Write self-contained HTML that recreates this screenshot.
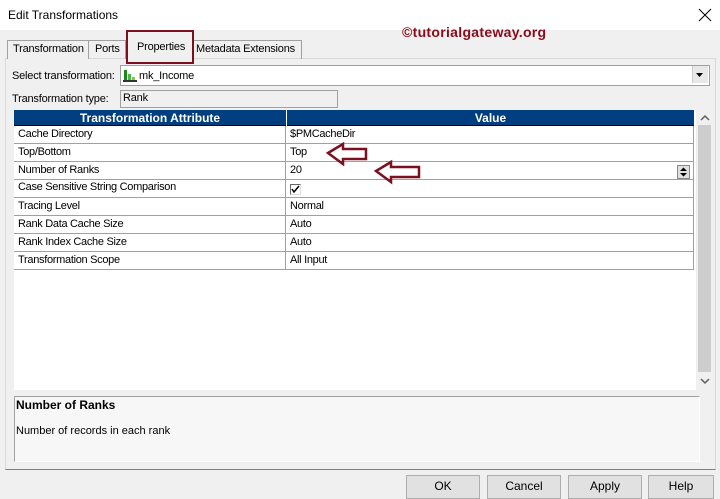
<!DOCTYPE html><html><head><style>
body{margin:0;width:720px;height:494px;background:#f0f0f0;font-family:"Liberation Sans",sans-serif;font-size:11px;position:relative;overflow:hidden;color:#000}
.a{position:absolute}
.t{font-size:11px;letter-spacing:-0.2px}
.row{position:absolute;left:14px;width:679px;height:17px;border-bottom:1px solid #a0a0a0;background:#fff}
.row span{position:absolute;top:2px;font-size:11px;letter-spacing:-0.3px}
.row .c1{left:4px}.row .c2{left:276px}
.row i{position:absolute;left:271px;top:0;height:18px;border-left:1px solid #a0a0a0}
.btn{position:absolute;top:475px;height:22px;border:1px solid #adadad;background:#e1e1e1;text-align:center;line-height:20px;font-size:12px}
</style></head><body>
<div class="a" style="left:0;top:0;width:720px;height:30px;background:#fff"></div>
<div class="a" style="left:8px;top:8px;font-size:12px">Edit Transformations</div>
<svg class="a" style="left:698px;top:8px" width="14" height="14"><path d="M1 1L13 13M13 1L1 13" stroke="#000" stroke-width="1"/></svg>
<div class="a" style="left:402px;top:24px;color:#8b0a1a;font-weight:bold;font-size:14px;letter-spacing:0.3px">©tutorialgateway.org</div>
<div class="a" style="left:5px;top:58px;width:709px;height:410px;border:1px solid #d9d9d9;border-bottom:1px solid #808080;background:#f0f0f0"></div>
<div class="a" style="left:7px;top:40px;width:80px;height:18px;border:1px solid #a0a0a0;border-bottom:none;background:#f0f0f0"></div>
<div class="a t" style="left:13px;top:43px">Transformation</div>
<div class="a" style="left:88px;top:40px;width:36px;height:18px;border:1px solid #a0a0a0;border-bottom:none"></div>
<div class="a t" style="left:95px;top:43px">Ports</div>
<div class="a" style="left:192px;top:40px;width:108px;height:18px;border:1px solid #a0a0a0;border-bottom:none"></div>
<div class="a t" style="left:196px;top:43px">Metadata Extensions</div>
<div class="a" style="left:126px;top:30px;width:64px;height:30px;border:2px solid #7b1020;background:#f0f0f0"></div>
<div class="a t" style="left:137px;top:41px">Properties</div>
<div class="a t" style="left:12px;top:70px">Select transformation:</div>
<div class="a" style="left:120px;top:65px;width:588px;height:19px;border:1px solid #a0a0a0;background:#fff"></div>
<svg class="a" style="left:123px;top:68px" width="14" height="14"><rect x="1" y="2" width="3" height="11" fill="#1a8a1a"/><rect x="5" y="6" width="3" height="7" fill="#4cb84c"/><rect x="9" y="9" width="3" height="4" fill="#7dcc3a"/><rect x="0" y="12" width="14" height="2" fill="#333"/></svg>
<div class="a t" style="left:139px;top:70px">mk_Income</div>
<div class="a" style="left:692px;top:66px;width:15px;height:17px;background:#e8e8e8;border-left:1px solid #ccc"></div>
<svg class="a" style="left:695px;top:72px" width="10" height="6"><path d="M1 1h7l-3.5 4z" fill="#000"/></svg>
<div class="a t" style="left:12px;top:93px">Transformation type:</div>
<div class="a" style="left:120px;top:90px;width:216px;height:16px;border:1px solid #a0a0a0;background:#f0f0f0"></div>
<div class="a t" style="left:123px;top:92px">Rank</div>
<div class="a" style="left:14px;top:110px;width:682px;height:280px;background:#fff"></div>
<div class="a" style="left:14px;top:110px;width:680px;height:15px;background:#003f7f;border-bottom:1px solid #000"></div>
<div class="a" style="left:286px;top:110px;width:1px;height:16px;background:#fff"></div>
<div class="a" style="left:14px;top:111px;width:272px;text-align:center;color:#fff;font-weight:bold;font-size:12px">Transformation Attribute</div>
<div class="a" style="left:287px;top:111px;width:407px;text-align:center;color:#fff;font-weight:bold;font-size:12px">Value</div>
<div class="row" style="top:126px;border-right:1px solid #a0a0a0"><span class="c1">Cache Directory</span><i></i><span class="c2">$PMCacheDir</span></div>
<div class="row" style="top:144px;border-right:1px solid #a0a0a0"><span class="c1">Top/Bottom</span><i></i><span class="c2">Top</span></div>
<div class="row" style="top:162px;border-right:1px solid #a0a0a0"><span class="c1">Number of Ranks</span><i></i><span class="c2">20</span></div>
<div class="row" style="top:180px;border-right:1px solid #a0a0a0"><span class="c1" style="top:1px">Case Sensitive String Comparison</span><i></i></div>
<div class="row" style="top:198px;border-right:1px solid #a0a0a0"><span class="c1">Tracing Level</span><i></i><span class="c2">Normal</span></div>
<div class="row" style="top:216px;border-right:1px solid #a0a0a0"><span class="c1">Rank Data Cache Size</span><i></i><span class="c2">Auto</span></div>
<div class="row" style="top:234px;border-right:1px solid #a0a0a0"><span class="c1">Rank Index Cache Size</span><i></i><span class="c2">Auto</span></div>
<div class="row" style="top:252px;border-right:1px solid #a0a0a0"><span class="c1">Transformation Scope</span><i></i><span class="c2">All Input</span></div>
<div class="a" style="left:290px;top:184px;width:9px;height:9px;border:1px solid #666;border-right-color:#ddd;border-bottom-color:#ddd;background:#fff"></div>
<svg class="a" style="left:291px;top:185px" width="9" height="9"><path d="M1 4l2 3 5-6" stroke="#000" stroke-width="1.5" fill="none"/></svg>
<div class="a" style="left:677px;top:165px;width:11px;height:12px;background:#e0e0e0;border:1px solid #888"></div>
<svg class="a" style="left:678px;top:166px" width="11" height="12"><path d="M2 5h7L5.5 1.5z M2 7h7L5.5 10.5z" fill="#000"/></svg>
<svg class="a" style="left:325px;top:141px" width="100" height="46">
<path d="M3 12L18 3v5h23v10H18v5z" fill="none" stroke="#7b1020" stroke-width="2.5"/>
<path d="M51 30L66 21v5h28v10H66v5z" fill="none" stroke="#7b1020" stroke-width="2.5"/></svg>
<div class="a" style="left:696px;top:110px;width:16px;height:280px;background:#f0f0f0"></div>
<div class="a" style="left:698px;top:125px;width:13px;height:247px;background:#cdcdcd"></div>
<svg class="a" style="left:700px;top:114px" width="10" height="8"><path d="M1 6l4-4 4 4" stroke="#606060" stroke-width="1.5" fill="none"/></svg>
<svg class="a" style="left:700px;top:377px" width="10" height="8"><path d="M1 2l4 4 4-4" stroke="#606060" stroke-width="1.5" fill="none"/></svg>
<div class="a" style="left:14px;top:396px;width:684px;height:64px;border:1px solid #a0a0a0;border-right-color:#fff;border-bottom-color:#fff;background:#f7f7f7"></div>
<div class="a" style="left:16px;top:398px;font-weight:bold;font-size:12px">Number of Ranks</div>
<div class="a" style="left:16px;top:425px;font-size:11px">Number of records in each rank</div>
<div class="btn" style="left:406px;width:72px">OK</div>
<div class="btn" style="left:487px;width:72px">Cancel</div>
<div class="btn" style="left:568px;width:72px">Apply</div>
<div class="btn" style="left:648px;width:64px">Help</div>
</body></html>
